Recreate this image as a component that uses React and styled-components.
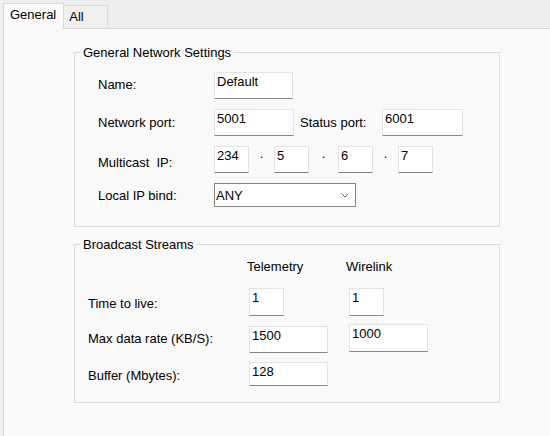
import React from "react";
import styled, { createGlobalStyle } from "styled-components";

const GlobalStyle = createGlobalStyle`
  html, body {
    margin: 0;
    padding: 0;
    background: #eeeeee;
  }

  body {
    font-family: "Liberation Sans", Arial, sans-serif;
    font-size: 13px;
    line-height: 15px;
    color: #000;
  }
`;

const Window = styled.div`
  display: flex;
  flex-direction: column;
  min-height: 100vh;
`;

const TabStrip = styled.div`
  display: flex;
  align-items: flex-end;
  height: 28px;
  padding-left: 3px;
`;

const Tab = styled.div`
  position: relative;
  box-sizing: border-box;
  height: ${(p) => (p.$active ? 26 : 23)}px;
  min-width: ${(p) => p.$minW || 0}px;
  margin-bottom: ${(p) => (p.$active ? -1 : 0)}px;
  margin-left: ${(p) => (p.$active ? 0 : -1)}px;
  padding: 3px 7px 0 ${(p) => (p.$active ? 6 : 5)}px;
  background: ${(p) => (p.$active ? "#f9f9f9" : "#f0f0f0")};
  border: 1px solid #dadada;
  border-bottom: none;
  z-index: ${(p) => (p.$active ? 2 : 1)};
  cursor: default;
`;

const Panel = styled.div`
  flex: 1;
  margin-left: 3px;
  padding: 15px 0 0 70px;
  background: #f9f9f9;
  border-top: 1px solid #dadada;
  border-left: 1px solid #dadada;
`;

const Group = styled.fieldset`
  box-sizing: border-box;
  width: 426px;
  min-width: 0;
  margin: ${(p) => p.$mt || 0}px 0 0 0;
  padding: 0;
  border: 1px solid #dcdcdc;
`;

const Legend = styled.legend`
  margin-left: 6px;
  padding: 0 2px;
  line-height: 17px;
`;

const Body = styled.div`
  display: flex;
  flex-direction: column;
  gap: ${(p) => p.$gap || 0}px;
  padding: ${(p) => p.$pad};
`;

const Row = styled.div`
  display: flex;
  align-items: flex-start;
  margin-top: ${(p) => p.$mt || 0}px;
`;

const Label = styled.label`
  flex: none;
  width: ${(p) => p.$w}px;
  margin-top: ${(p) => p.$mt || 0}px;
  white-space: nowrap;
`;

const Field = styled.input`
  flex: none;
  box-sizing: border-box;
  width: ${(p) => p.$w}px;
  height: ${(p) => p.$h}px;
  margin: ${(p) => p.$mt || 0}px ${(p) => p.$mr || 0}px 0 0;
  padding: 2px 3px ${(p) => p.$h - 17}px 2px;
  font: inherit;
  line-height: 15px;
  color: #000;
  background: #fff;
  border: 1px solid #e3e3e3;
  border-bottom-color: #868686;
  border-radius: 0;
  outline: none;
`;

const Dot = styled.span`
  flex: none;
  width: ${(p) => p.$w}px;
  text-align: center;
`;

const Combo = styled.div`
  box-sizing: border-box;
  display: flex;
  align-items: center;
  justify-content: space-between;
  width: 142px;
  height: 24px;
  padding: 0 6px 0 1px;
  background: #fff;
  border: 1px solid #868686;
`;

const HeadRow = styled.div`
  display: flex;
  padding-left: 159px;
`;

const Head = styled.span`
  width: 99px;
`;

const Chevron = () => (
  <svg width="8" height="5" viewBox="0 0 8 5">
    <path d="M0.5 0.5 L4 4 L7.5 0.5" fill="none" stroke="#606060" strokeWidth="1" />
  </svg>
);

const App = () => {
  return (
    <Window>
      <GlobalStyle />
      <TabStrip>
        <Tab $active>General</Tab>
        <Tab $minW={45}>All</Tab>
      </TabStrip>
      <Panel>
        <Group>
          <Legend>General Network Settings</Legend>
          <Body $gap={10} $pad="11px 0 19px 23px">
            <Row>
              <Label $w={116} $mt={5}>Name:</Label>
              <Field $w={79} $h={27} defaultValue="Default" />
            </Row>
            <Row>
              <Label $w={116} $mt={6}>Network port:</Label>
              <Field $w={80} $h={27} $mr={6} defaultValue="5001" />
              <Label $w={82} $mt={6}>Status port:</Label>
              <Field $w={81} $h={27} defaultValue="6001" />
            </Row>
            <Row>
              <Label $w={116} $mt={9}>Multicast&nbsp; IP:</Label>
              <Field $w={35} $h={27} defaultValue="234" />
              <Dot $w={25}>.</Dot>
              <Field $w={35} $h={27} defaultValue="5" />
              <Dot $w={29}>.</Dot>
              <Field $w={35} $h={27} defaultValue="6" />
              <Dot $w={25}>.</Dot>
              <Field $w={35} $h={27} defaultValue="7" />
            </Row>
            <Row>
              <Label $w={116} $mt={5}>Local IP bind:</Label>
              <Combo role="combobox">
                <span>ANY</span>
                <Chevron />
              </Combo>
            </Row>
          </Body>
        </Group>

        <Group $mt={9}>
          <Legend>Broadcast Streams</Legend>
          <Body $pad="6px 0 16px 13px">
            <HeadRow>
              <Head>Telemetry</Head>
              <Head>Wirelink</Head>
            </HeadRow>
            <Row $mt={14}>
              <Label $w={161} $mt={8}>Time to live:</Label>
              <Field $w={35} $h={28} $mr={65} defaultValue="1" />
              <Field $w={35} $h={28} defaultValue="1" />
            </Row>
            <Row $mt={8}>
              <Label $w={161} $mt={7}>Max data rate (KB/S):</Label>
              <Field $w={79} $h={27} $mt={2} $mr={21} defaultValue="1500" />
              <Field $w={79} $h={28} defaultValue="1000" />
            </Row>
            <Row $mt={9}>
              <Label $w={161} $mt={6}>Buffer (Mbytes):</Label>
              <Field $w={79} $h={24} defaultValue="128" />
            </Row>
          </Body>
        </Group>
      </Panel>
    </Window>
  );
};

export default App;
